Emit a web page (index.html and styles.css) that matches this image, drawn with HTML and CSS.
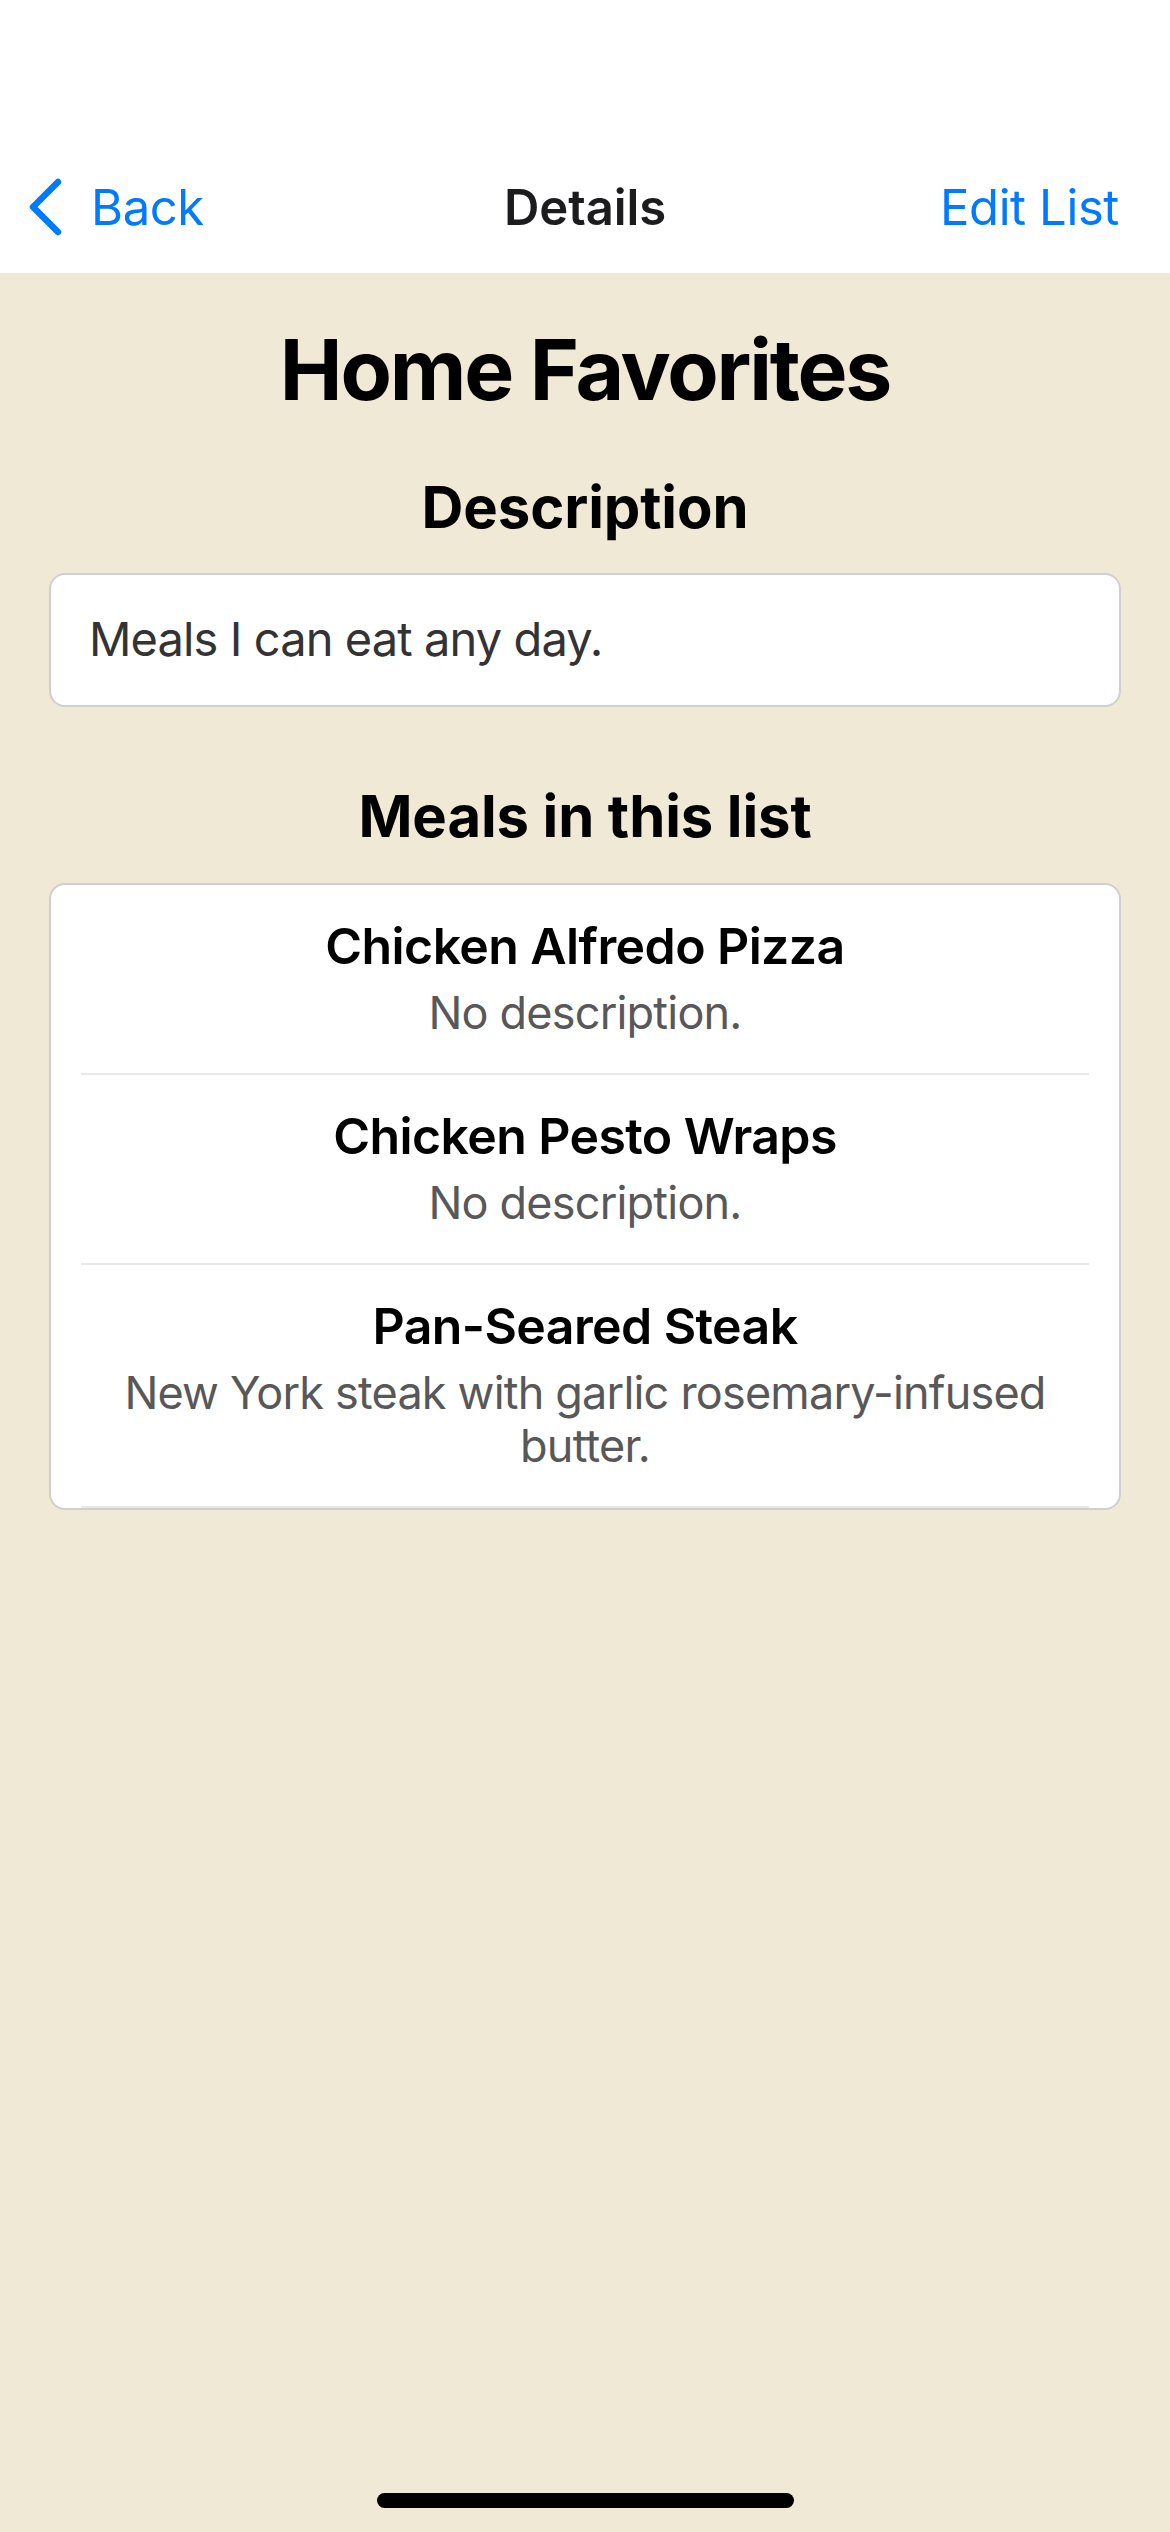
FILE: index.html
```html
<!DOCTYPE html>
<html lang="en">
<head>
<meta charset="utf-8">
<title>Details</title>
<link rel="stylesheet" href="styles.css">
</head>
<body>
<div class="screen">
  <header class="topbar">
    <nav class="nav">
      <a class="nav-back" href="#">
        <svg class="chevron" width="36" height="58" viewBox="0 0 36 58" aria-hidden="true">
          <polyline points="31,4 6,29 31,54" fill="none" stroke="#007AFF" stroke-width="6.5" stroke-linecap="round" stroke-linejoin="round"/>
        </svg>
        <span>Back</span>
      </a>
      <div class="nav-title">Details</div>
      <a class="nav-action" href="#">Edit List</a>
    </nav>
  </header>

  <main class="content">
    <h1 class="list-title">Home Favorites</h1>

    <h2 class="section-title">Description</h2>
    <div class="desc-box">Meals I can eat any day.</div>

    <h2 class="section-title section-meals">Meals in this list</h2>
    <ul class="meal-card">
      <li class="meal-row">
        <div class="meal-name">Chicken Alfredo Pizza</div>
        <div class="meal-desc">No description.</div>
      </li>
      <li class="meal-row">
        <div class="meal-name">Chicken Pesto Wraps</div>
        <div class="meal-desc">No description.</div>
      </li>
      <li class="meal-row">
        <div class="meal-name">Pan-Seared Steak</div>
        <div class="meal-desc">New York steak with garlic rosemary-infused butter.</div>
      </li>
    </ul>
  </main>

  <div class="home-indicator"></div>
</div>
</body>
</html>
```

FILE: styles.css
```css
* {
  box-sizing: border-box;
}

html, body {
  margin: 0;
  padding: 0;
}

body {
  width: 1170px;
  height: 2532px;
  background: #F0E9D6;
  font-family: Inter, "Noto Sans", "Liberation Sans", sans-serif;
  color: #000;
  overflow: hidden;
}

.screen {
  position: relative;
  width: 1170px;
  height: 2532px;
}

/* ---------- top bar ---------- */
.topbar {
  background: #ffffff;
  height: 273px;
  padding-top: 141px;
}

.nav {
  height: 132px;
  display: grid;
  grid-template-columns: 1fr auto 1fr;
  align-items: center;
  padding: 0 27px;
}

.nav a {
  text-decoration: none;
  color: #007AFF;
  font-size: 49px;
  font-weight: 400;
  letter-spacing: -0.4px;
}

.nav-back {
  display: flex;
  align-items: center;
  gap: 28px;
  justify-self: start;
}

.chevron {
  display: block;
}

.nav-title {
  font-size: 49px;
  font-weight: 600;
  color: #1c1c1e;
  letter-spacing: -0.1px;
}

.nav-action {
  justify-self: end;
  margin-right: 24px;
}

/* ---------- content ---------- */
.content {
  padding: 47px 49px 0;
  display: flex;
  flex-direction: column;
}

.list-title {
  margin: 0;
  text-align: center;
  font-size: 84px;
  line-height: 100px;
  font-weight: 700;
  letter-spacing: -2.2px;
}

.section-title {
  margin: 52px 0 0;
  text-align: center;
  font-size: 58px;
  line-height: 70px;
  font-weight: 700;
  letter-spacing: -0.1px;
}

.section-meals {
  margin-top: 74px;
}

.desc-box {
  margin-top: 31px;
  background: #ffffff;
  border: 2px solid #cfcfcf;
  border-radius: 16px;
  padding: 35px 38px 37px;
  font-size: 47px;
  line-height: 58px;
  color: #333333;
  letter-spacing: -0.9px;
}

.meal-card {
  list-style: none;
  margin: 32px 0 0;
  padding: 0;
  background: #ffffff;
  border: 2px solid #cfcfcf;
  border-radius: 16px;
  overflow: hidden;
}

.meal-row {
  margin: 0 30px;
  padding: 31px 0 34px;
  border-bottom: 2px solid #e8e8e8;
  text-align: center;
  display: flex;
  flex-direction: column;
  gap: 10px;
}

.meal-name {
  font-size: 50px;
  line-height: 60px;
  font-weight: 600;
  letter-spacing: -0.6px;
}

.meal-desc {
  font-size: 45px;
  line-height: 53px;
  color: #585858;
  letter-spacing: -0.8px;
  padding: 0 30px;
}

/* ---------- home indicator ---------- */
.home-indicator {
  position: absolute;
  left: 377px;
  top: 2493px;
  width: 417px;
  height: 15px;
  border-radius: 8px;
  background: #000000;
}
```
